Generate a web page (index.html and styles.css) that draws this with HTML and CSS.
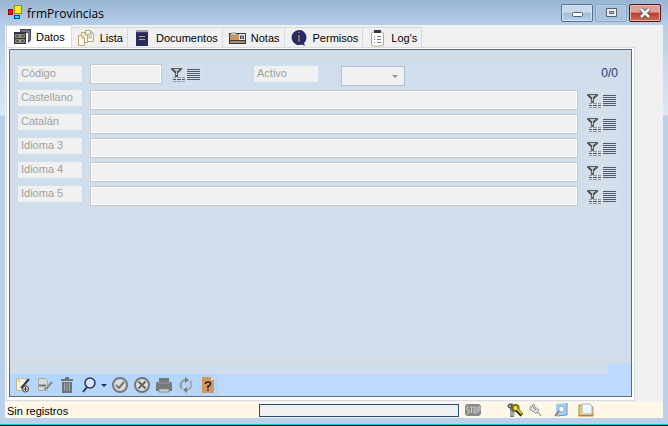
FILE: index.html
```html
<!DOCTYPE html>
<html lang="es">
<head>
<meta charset="utf-8">
<title>frmProvincias</title>
<link rel="stylesheet" href="styles.css">
</head>
<body>
<svg class="sprites" aria-hidden="true">
  <symbol id="filter" viewBox="0 0 16 21" shape-rendering="crispEdges">
    <path d="M1 4h11v2h-1v1h-1v1H9v1H8v4H5V9H4V8H3V7H2V6H1z" fill="#5f5f5f"/>
    <path d="M4 5h5v1H8v1H7v4H6V7H5V6H4z" fill="#c4c4c4"/>
    <path d="M3 13.500h3m1 0h4m1 0h3M3 17.500h3m1 0h4m1 0h3" stroke="#999"/>
    <path d="M3 15.500h3m1 0h4m1 0h3" stroke="#555"/>
  </symbol>
  <symbol id="lines" viewBox="0 0 16 21" shape-rendering="crispEdges">
    <path d="M1 5.500h13M1 7.500h13M1 9.500h13M1 11.500h13M1 13.500h13M1 15.500h13" stroke="#555b66"/>
  </symbol>
</svg>

<header class="titlebar">
  <svg class="app-icon" viewBox="0 0 15 15" shape-rendering="crispEdges">
    <path d="M0 4h5v6H0z" fill="#900"/><path d="M1 5h3v4H1z" fill="#f01020"/>
    <path d="M6 0h8v9H6z" fill="#a08a00"/><path d="M7 1h6v7H7z" fill="#ffee20"/>
    <path d="M6 10h6v4H6z" fill="#0040c0"/><path d="M7 11h4v2H7z" fill="#20e0ff"/>
  </svg>
  <h1>frmProvincias</h1>
  <button class="win-btn" aria-label="Minimizar"><svg viewBox="0 0 12 12"><rect x="1.500" y="5.500" width="10" height="4" rx="1" fill="#fff" stroke="#56606e"/></svg></button>
  <button class="win-btn dim" aria-label="Maximizar"><svg viewBox="0 0 12 12"><path d="M1.500 1.500h10v8h-10z" fill="#eee" stroke="#56606e"/><path d="M4.500 4.500h4v2h-4z" fill="#a9c4df" stroke="#56606e"/></svg></button>
  <button class="win-btn close" aria-label="Cerrar"><svg viewBox="0 0 12 12"><path d="M2 2l8 8m0-8l-8 8" stroke="#565060" stroke-width="4.500"/><path d="M2 2l8 8m0-8l-8 8" stroke="#f4f4f4" stroke-width="2.600"/></svg></button>
</header>

<main class="client">
  <nav class="tabs" role="tablist">
    <button class="tab active" role="tab" aria-selected="true">
      <svg viewBox="0 0 18 18"><path d="M7 1h11v11l-3 3V5H7z" fill="#44485c"/><path d="M8 3h8M16 3v9" stroke="#999a90"/><path d="M1 4h12v12H1z" fill="#32343f"/><path d="M2.500 6.500h9v3h-9zm0 5h9v3h-9z" fill="#5d5f50" stroke="#8d897a"/><path d="M6 8h2m-2 5h2" stroke="#eee" /></svg>Datos</button>
    <button class="tab" role="tab">
      <svg viewBox="0 0 18 18"><g fill="#fffdf1" stroke="#b7a577"><path d="M8.500 1.500h5l3 3v8h-8z"/><path d="M4.500 3.500h4l2 2v8h-6z"/><path d="M1.500 6.500h4l2 2v8h-6z"/></g><path d="M11 5h4m-4 2h4m-4 2h4M13 1v3h3" stroke="#a8a8a0" fill="none"/><path d="M8 4v2h2M5 7v2h2" stroke="#c39258" fill="none"/></svg>Lista</button>
    <button class="tab" role="tab">
      <svg viewBox="0 0 18 18"><path d="M3 3h12v14H3z" fill="#292c5b"/><path d="M4 1v3m2-3v3m2-3v3m2-3v3m2-3v3m2-3v3" stroke="#555774"/><path d="M6 7.500h6m-6 3h6" stroke="#b4a876"/></svg>Documentos</button>
    <button class="tab" role="tab">
      <svg viewBox="0 0 18 18"><path d="M1 4h17v11H1z" fill="#303b50"/><path d="M2 5h9v6H2z" fill="#c99565"/><path d="M3 3h5v3H3z" fill="#b8bdbb"/><path d="M11 5h6v6h-6z" fill="#e6e8e6"/><path d="M12.500 10V7h3v3m-3-1h3" stroke="#38414f" fill="none"/><path d="M2 12h15v2H2z" fill="#b58a61"/></svg>Notas</button>
    <button class="tab" role="tab">
      <svg viewBox="0 0 18 18"><path d="M9 1a7.500 7.500 0 1 0 3 14.400l3 1.600-1-3A7.500 7.500 0 0 0 9 1z" fill="#292b61"/><path d="M9 3v1m0 2v7" stroke="#d0b67c"/></svg>Permisos</button>
    <button class="tab" role="tab">
      <svg viewBox="0 0 18 18"><rect x="3.500" y="3" width="12" height="14" rx="2" fill="#fff" stroke="#b8aa79"/><path d="M6 1h7v3H6z" fill="#34384e"/><path d="M6 7.500h1m2 0h4m-7 3h1m2 0h4m-7 3h1m2 0h4" stroke="#777"/></svg>Log's</button>
  </nav>

  <section class="page">
    <div class="panel">
      <form class="form">
        <div class="row first">
          <label for="codigo">Código</label>
          <input id="codigo" class="short" type="text">
          <span class="tools"><button type="button" aria-label="Filtrar"><svg><use href="#filter"/></svg></button><button type="button" aria-label="Listar"><svg><use href="#lines"/></svg></button></span>
          <label class="activo" for="activo">Activo</label>
          <span class="combo"><select id="activo"><option></option></select></span>
          <output class="count">0/0</output>
        </div>
        <div class="row">
          <label for="castellano">Castellano</label><input id="castellano" type="text">
          <span class="tools"><button type="button" aria-label="Filtrar"><svg><use href="#filter"/></svg></button><button type="button" aria-label="Listar"><svg><use href="#lines"/></svg></button></span>
        </div>
        <div class="row">
          <label for="catalan">Catalán</label><input id="catalan" type="text">
          <span class="tools"><button type="button" aria-label="Filtrar"><svg><use href="#filter"/></svg></button><button type="button" aria-label="Listar"><svg><use href="#lines"/></svg></button></span>
        </div>
        <div class="row">
          <label for="idioma3">Idioma 3</label><input id="idioma3" type="text">
          <span class="tools"><button type="button" aria-label="Filtrar"><svg><use href="#filter"/></svg></button><button type="button" aria-label="Listar"><svg><use href="#lines"/></svg></button></span>
        </div>
        <div class="row">
          <label for="idioma4">Idioma 4</label><input id="idioma4" type="text">
          <span class="tools"><button type="button" aria-label="Filtrar"><svg><use href="#filter"/></svg></button><button type="button" aria-label="Listar"><svg><use href="#lines"/></svg></button></span>
        </div>
        <div class="row">
          <label for="idioma5">Idioma 5</label><input id="idioma5" type="text">
          <span class="tools"><button type="button" aria-label="Filtrar"><svg><use href="#filter"/></svg></button><button type="button" aria-label="Listar"><svg><use href="#lines"/></svg></button></span>
        </div>
      </form>
      <div class="dock">
        <div class="strip"></div>
        <div class="toolbar" role="toolbar">
          <button aria-label="Nuevo"><svg viewBox="0 0 16 16"><path d="M1.500 1.500h8l2 2v10h-10z" fill="#f6f2df" stroke="#c4b98d"/><path d="M14 2L8 9l-2 2" stroke="#303448" stroke-width="2"/><path d="M3 2l2 3" stroke="#c79c52"/><circle cx="10.500" cy="12" r="3" fill="#fff" stroke="#333"/><path d="M10.500 10v4m-2-2h4" stroke="#333"/></svg></button>
          <button aria-label="Editar"><svg viewBox="0 0 16 16"><path d="M1.500 1.500h7l2 2v10h-9z" fill="#d8dadc" stroke="#a8aaad"/><path d="M2 8.500h7" stroke="#777" stroke-width="2"/><path d="M15 5l-5 6-3 1" stroke="#888" stroke-width="2" fill="none"/></svg></button>
          <button aria-label="Eliminar"><svg viewBox="0 0 16 16"><path d="M2 2h12v2H2zM6 0h4v3H6zM3 5h10v11H3z" fill="#6f7276"/><path d="M5.500 6v8m2.500-8v8m2.500-8v8" stroke="#a7abb0"/></svg></button>
          <button class="search" aria-label="Buscar"><svg viewBox="0 0 16 16"><circle cx="9" cy="6" r="5" fill="#d6e6fa" stroke="#30356e" stroke-width="1.600"/><path d="M6 10l-4 5" stroke="#30356e" stroke-width="2"/></svg><i class="arrow"></i></button>
          <button aria-label="Aceptar"><svg viewBox="0 0 16 16"><circle cx="8" cy="8" r="7" fill="#dedede" stroke="#777" stroke-width="2"/><path d="M4 8l3 3 5-6" fill="none" stroke="#777" stroke-width="2"/></svg></button>
          <button aria-label="Cancelar"><svg viewBox="0 0 16 16"><circle cx="8" cy="8" r="7" fill="#dedede" stroke="#777" stroke-width="2"/><path d="M4.500 4.500l7 7m0-7l-7 7" stroke="#666" stroke-width="2"/></svg></button>
          <button aria-label="Imprimir"><svg viewBox="0 0 16 16"><path d="M3 1h10v4h2l1 1v8H0V6l1-1h2z" fill="#74777b"/><path d="M2 6h12" stroke="#999"/><path d="M3 12h10v3H3z" fill="#d2d4d8" stroke="#888"/></svg></button>
          <button aria-label="Actualizar"><svg viewBox="0 0 16 16"><path d="M4 12A5.500 5.500 0 0 1 7 3" fill="none" stroke="#999" stroke-width="2"/><path d="M12 4a5.500 5.500 0 0 1-3 9" fill="none" stroke="#aaa" stroke-width="2"/><path d="M7 0l4 3-4 3zM9 10v6l-4-3z" fill="#777b80"/></svg></button>
          <button aria-label="Ayuda"><svg viewBox="0 0 16 16"><path d="M2 0h9l3 3v13H2z" fill="#d1975e"/><path d="M11 0v3h3z" fill="#f4ddc0"/><path d="M5.500 7q0-2 2.500-2t2.500 2q0 1-2.500 2.500v2m0 1v1.500" fill="none" stroke="#20242e" stroke-width="1.600"/></svg></button>
        </div>
      </div>
    </div>
  </section>

  <footer class="status">
    <span class="message">Sin registros</span>
    <progress value="0" max="100" aria-label="Progreso"></progress>
    <svg class="stop" viewBox="0 0 16 14"><path d="M2 1h12l2 2v8l-2 2H2l-2-2V3z" fill="#8a8a8a"/><path d="M4 4H2v3h2v3H2M5 4h3M6.500 4v6M9 4h2v6H9zM13 10V4h2v3h-2" fill="none" stroke="#ccc"/></svg>
    <svg class="keys" viewBox="0 0 16 14"><path d="M1 2l4-2 3 3-1 11H3V6z" fill="#777b86"/><circle cx="3" cy="3" r="2" fill="#999" stroke="#444"/><circle cx="8.500" cy="5" r="3" fill="#eee070" stroke="#777000" stroke-width="2"/><path d="M10 7l5 5" stroke="#25250b" stroke-width="4"/><path d="M10 6l5 5" stroke="#d6c800" stroke-width="2"/><path d="M4 8v5m2-4v4" stroke="#ccd"/></svg>
    <svg class="pin" viewBox="0 0 13 14"><path d="M1 4l4-3 1 3 4 3-3 4-3-3-3-1z" fill="#ddd" stroke="#999"/><path d="M3 3l4 4m2 2l3 4" stroke="#777"/></svg>
    <svg class="find" viewBox="0 0 14 14"><path d="M2 1l11-1v12l-11 1z" fill="#a6cdf0"/><path d="M13 0v12l-10 1" fill="none" stroke="#6093c6"/><circle cx="7.500" cy="6" r="3" fill="#eef8ff" stroke="#80aacc"/><path d="M5 8l-4 5" stroke="#987f70" stroke-width="2"/></svg>
    <svg class="folder" viewBox="0 0 16 14"><path d="M1 2h5l1 1h7l1 1v9H1z" fill="#f2cf6b" stroke="#bd8530"/><path d="M4 1h8l2 2v8H4z" fill="#eff7ff" stroke="#9db8cf"/><path d="M1 12.500h14" stroke="#c57b22"/></svg>
  </footer>
</main>
</body>
</html>
```

FILE: styles.css
```css
* { box-sizing: border-box; }

body {
  margin: 0;
  min-height: 100vh;
  display: flex;
  flex-direction: column;
  font: 11px/14px "Liberation Sans", Arial, sans-serif;
  color: #000;
  background: linear-gradient(#b5cde8 25px, #dbe8f6 115px, #b9d1ea 116px);
  border-bottom: 1px solid #000;
}

button { margin: 0; padding: 0; border: 0; background: none; font: inherit; color: inherit; }
svg { display: block; flex: none; }
.sprites { position: absolute; width: 0; height: 0; }

.titlebar {
  height: 25px;
  display: flex;
  align-items: center;
  gap: 2px;
  padding: 0 7px 0 8px;
  background: linear-gradient(#9ab5d2, #b5cee9);
}
.app-icon { width: 15px; height: 15px; }
h1 {
  flex: 1;
  margin: 0;
  padding: 2px 0 0 2px;
  font: 12px/16px "Open Sans", "Noto Sans", sans-serif;
}
.win-btn {
  width: 32px;
  height: 18px;
  display: grid;
  place-items: center;
  border: 1px solid #597290;
  border-radius: 2px;
  background: linear-gradient(#c8d9eb 45%, #a3bdd9 50%, #b7d0ea);
  box-shadow: inset 0 0 0 1px #d6e4f2;
}
.win-btn svg { width: 12px; height: 12px; }
.win-btn.dim { border-color: #86a3c2; background: #a9c3de; box-shadow: inset 0 0 0 1px #b8cfe6; }
.win-btn.close {
  border-color: #541621;
  background: linear-gradient(#e1a096 45%, #bb3d2b 50%, #cc6d50);
  box-shadow: inset 0 0 0 1px #e9b5a9;
}

.client {
  flex: 1;
  display: flex;
  flex-direction: column;
  margin: 0 5px;
  background: #f0f0f0;
}

.tabs { display: flex; align-items: flex-end; height: 22px; padding-left: 1px; }
.tab {
  display: flex;
  align-items: center;
  gap: 5px;
  height: 20px;
  padding: 0 4px 0 5px;
  border: solid #d9d9d9;
  border-width: 1px 1px 0 0;
}
.tab svg { width: 18px; height: 18px; }
.tab.active { height: 22px; padding: 0 6px; background: #fff; border-left-width: 1px; }

.page {
  flex: 1;
  display: flex;
  margin: 0 28px 1px 1px;
  padding: 1px 2px 3px;
  border: 1px solid #dcdcdc;
  background: #fff;
}
.panel {
  flex: 1;
  display: flex;
  flex-direction: column;
  border: 1px solid #646870;
  background: #d0dded;
}

.form {
  flex: 1;
  display: flex;
  flex-direction: column;
  gap: 3px;
  margin-top: 6px;
  padding: 6px 13px 0 8px;
  border-top: 2px solid #d8dade;
  border-bottom: 2px solid #d8dade;
}
.row { display: flex; align-items: flex-start; height: 21px; }
.row.first { height: 23px; }
.row label {
  width: 64px;
  height: 16px;
  margin-right: 8px;
  padding-left: 3px;
  background: #f0f0f0;
  color: #a0a0a0;
}
.row.first label { margin-top: 2px; }
.row input {
  flex: 1;
  min-width: 0;
  height: 20px;
  margin: 0;
  padding: 0 3px;
  border: 1px solid #c8c8c8;
  box-shadow: inset 0 0 0 1px #fff;
  background: #f0f0f0;
  font: inherit;
}
.row input.short { flex: 0 0 72px; }
.tools { display: flex; margin-left: 8px; }
.tools button { width: 16px; height: 21px; box-shadow: inset 0 0 0 1px #dce0e8; }
.tools svg { width: 16px; height: 21px; }
.row .activo { margin: 0 23px 0 52px; }
.combo { position: relative; width: 64px; height: 20px; margin-top: 2px; }
.combo select {
  width: 100%;
  height: 100%;
  appearance: none;
  border: 1px solid #afbfd8;
  border-radius: 0;
  background: #f0f0f0;
  font: inherit;
}
.combo::after {
  content: "";
  position: absolute;
  right: 7px;
  top: 9px;
  border: solid transparent;
  border-width: 3px 3px 0;
  border-top-color: #a58c98;
}
.count { margin: 2px 0 0 auto; color: #26406f; font-size: 12px; }

.dock { background: #bfdaff; }
.strip { height: 12px; margin-right: 24px; background: #d0dded; }
.toolbar {
  display: flex;
  align-items: center;
  gap: 6px;
  width: 209px;
  height: 22px;
  padding-left: 5px;
  background: #b5d7fd;
}
.toolbar svg { width: 16px; height: 16px; }
.search { display: flex; align-items: center; gap: 4px; width: 25px; }
.arrow { border: solid transparent; border-width: 3px 3px 0; border-top-color: #20305c; }

.status {
  display: flex;
  align-items: center;
  height: 16px;
  padding: 0 69px 0 2px;
  background: #fff8e8;
  box-shadow: 0 6px #b9d1ea, 0 7px #19c5d8;
  margin-bottom: 7px;
}
/* Continues the frame edge under the side borders. */
body { box-shadow: inset 0 -1px #19c5d8; }
.message { flex: 1; padding-top: 2px; }
progress {
  appearance: none;
  width: 200px;
  height: 13px;
  border: 1px solid #234b84;
  background: #f0f0f0;
}
progress::-webkit-progress-bar { background: #f0f0f0; }
.status svg { height: 14px; }
.stop { width: 16px; margin-left: 6px; }
.keys { width: 16px; margin-left: 26px; }
.pin { width: 13px; margin-left: 6px; }
.find { width: 14px; margin-left: 12px; }
.folder { width: 16px; margin-left: 10px; }
```
